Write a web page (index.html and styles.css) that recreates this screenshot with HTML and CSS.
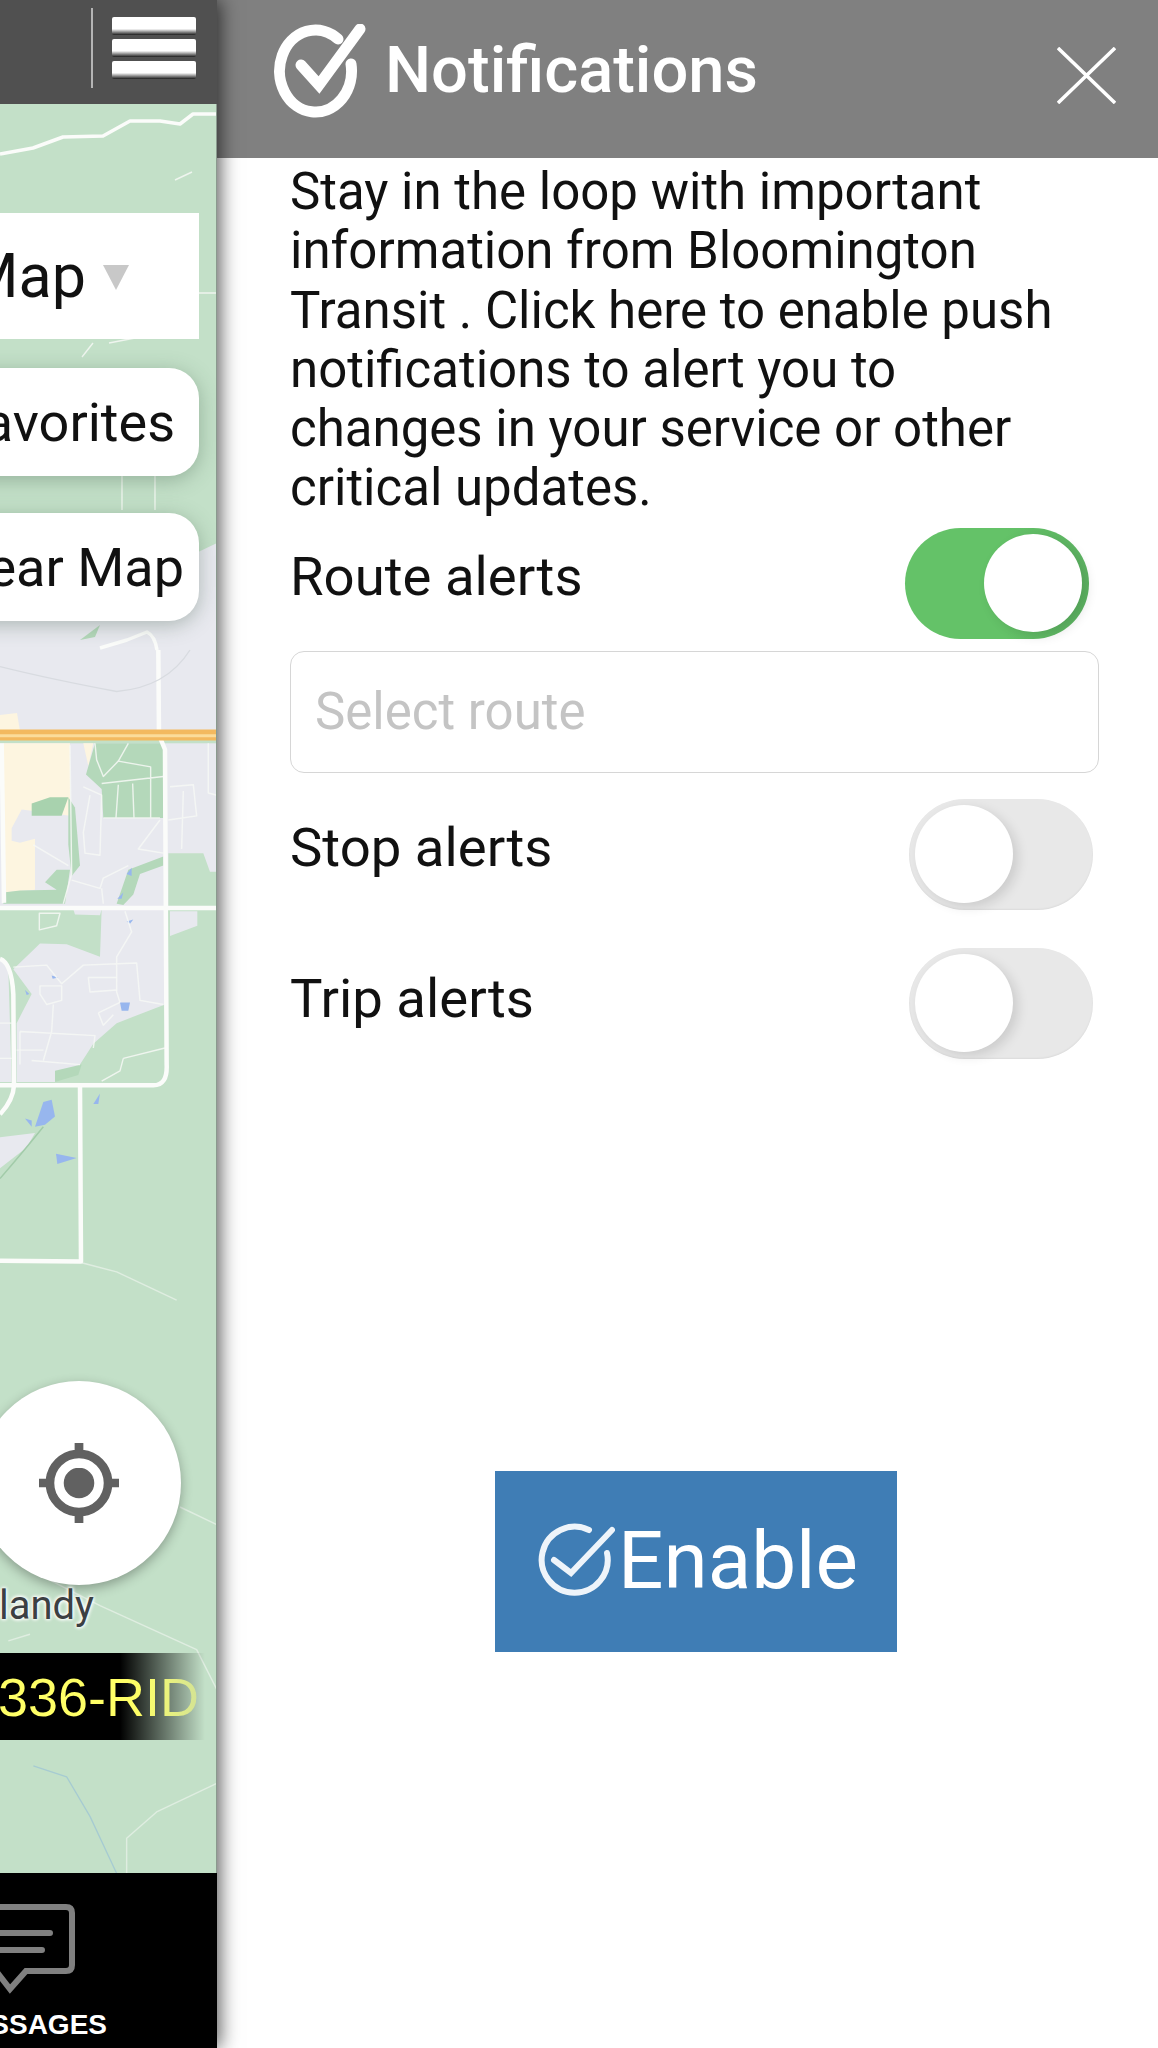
FILE: index.html
```html
<!DOCTYPE html>
<html lang="en">
<head>
  <meta charset="UTF-8">
  <meta name="viewport" content="width=device-width, initial-scale=1.0">
  <title>Notifications</title>
  <link rel="stylesheet" href="styles.css">
</head>
<body>
  <div class="app">

    <div class="side">
      <div class="topbar">
        <span class="divider"></span>
        <div class="burger"><span></span><span></span><span></span></div>
      </div>

      <div class="map">
        <svg class="map-art" viewBox="0 104 217 1769" preserveAspectRatio="none">
          <rect x="0" y="104" width="217" height="1769" fill="#c3e0c8"/>

          <!-- north part, page coordinates -->
          <path class="road" d="M0 154 L33 148 L63 137 L103 136 L130 121 L160 121 L180 124 L193 114 L217 114"/>
          <path class="thin" d="M175 180 L192 172 M180 293 L217 293 M82 357 L93 343 M109 343 L135 338 M122 476 L122 510 M155 476 L155 510"/>
          <path fill="#e8e9ef" d="M0 600 L120 590 L173 564 L217 543 L217 731 L0 731 Z"/>
          <path fill="#b4d8ba" d="M80 640 L100 625 L95 637 Z"/>
          <path fill="#fdf5e0" d="M0 715 L17 713 L20 731 L0 731 Z"/>
          <path class="road" d="M100 648 L127 640 L147 632 Q155 636 157 650"/>

          <!-- middle part, drawn in zoomed coordinates -->
          <g transform="translate(0 650) scale(.3333 .4146)">
            <rect x="0" y="225" width="650" height="400" fill="#e8e9ef"/>
            <path fill="#c3e0c8" d="M505 490 L610 490 L630 535 L650 535 L650 625 L505 625 Z"/>
            <path fill="#fdf5e0" d="M10 225 L210 225 L210 400 L65 385 L35 430 L35 460 L60 465 L105 455 L105 578 L10 585 Z"/>
            <path fill="#fdf5e0" d="M250 225 L280 225 L265 280 Z"/>
            <path fill="#b4d8ba" d="M258 300 L285 225 L490 225 L490 405 L310 405 L305 335 Z"/>
            <path fill="#a8d2ae" d="M95 370 L150 355 L205 355 L185 400 L95 400 Z"/>
            <path fill="#b4d8ba" d="M205 355 L225 380 L240 520 L215 545 L205 470 Z"/>
            <path fill="#b4d8ba" d="M135 560 L170 530 L210 530 L195 612 L10 612 L10 585 L60 580 L170 578 Z"/>
            <path fill="#b4d8ba" d="M350 612 L385 530 L490 498 L490 520 L420 540 L400 590 L370 615 Z"/>

            <path fill="#e8e9ef" d="M305 625 L495 625 L495 855 L350 900 L280 950 L240 1000 L165 1042 L50 1042 L50 900 L95 830 L40 770 L120 708 L200 710 L300 740 Z"/>
            <path fill="#e8e9ef" d="M510 630 L592 630 L592 665 L510 690 Z"/>
            <path fill="#e8e9ef" d="M0 745 L25 770 L35 1042 L0 1042 Z"/>
            <path fill="#e8e9ef" d="M0 1175 L105 1165 L80 1200 L0 1250 Z"/>
            <path fill="#b4d8ba" d="M165 1015 L245 1000 L235 1025 L165 1042 Z"/>
            <path fill="#e8e9ef" d="M220 625 L305 625 L300 640 L225 638 Z"/>

            <path class="water" d="M105 1150 L130 1090 L155 1085 L165 1125 L135 1145 Z"/>
            <path class="water" d="M75 1130 L95 1135 L95 1150 Z"/>
            <path class="water" d="M168 1215 L230 1225 L172 1240 Z"/>
            <path class="water" d="M280 1095 L300 1070 L295 1095 Z"/>
            <path class="water" d="M360 850 L390 850 L385 870 L365 870 Z"/>
            <path class="water" d="M380 540 L395 525 L395 545 Z"/>
            <path class="water" d="M352 600 L370 585 L365 600 Z"/>
            <path class="water" d="M380 655 L400 650 L390 660 Z"/>
            <path class="water" d="M155 785 L175 790 L158 793 Z"/>
            <path class="water" d="M75 820 L88 830 L80 832 Z"/>

            <path class="thin" d="M285 225 L290 265 L310 305 L355 268 L385 225 M355 268 L452 282 L452 405 M305 322 L490 305 M355 325 L348 405 M398 322 L402 405 M310 405 L480 405"/>
            <path class="thin" d="M510 330 L580 325 L590 400 L505 410 M550 340 L545 480 M625 225 L625 345 L650 350 M480 410 L415 480 L490 490"/>
            <path class="thin" d="M210 230 L215 540 L190 612 M215 555 L300 575 L310 550 L385 520 M305 575 L310 612 M250 330 L305 350 L300 495 L255 490 L250 440 L270 350 M100 470 L205 520"/>
            <path class="thin" d="M118 635 L180 635 L170 665 L118 675 Z M375 630 L395 680 L350 740 L350 825 L360 850 M40 765 L140 760 L185 805 L250 760 L410 755 L420 845 L490 855"/>
            <path class="thin" d="M120 810 L185 810 L185 845 L140 855 L120 830 Z M160 855 L155 920 L130 990 M265 790 L350 790 M265 790 L270 825 L350 820 M60 920 L285 930 L280 960 M50 965 L130 965 M60 920 L60 1000 M95 990 L240 1000 M295 875 L360 850 M295 875 L310 905 L340 880 M370 985 L495 960 M370 985 L360 1015 L305 1040"/>
            <path class="thin" d="M0 900 L35 900 M0 985 L35 985"/>

            <path class="road wide" d="M5 225 L12 610 M475 0 L477 205 L495 240 L500 1000 Q503 1050 460 1050 L0 1050 M0 622 L650 622 M240 1050 L243 1475 L0 1473 M0 745 Q35 755 40 830 L42 1050 Q40 1085 0 1120"/>
            <path class="highway" d="M0 205 L650 205"/>
            <path class="highway-mid" d="M0 207 L650 207"/>
            <path class="thin faint" d="M245 1478 L350 1500 L530 1568"/>
            <path class="grey-line" d="M0 40 Q150 70 350 100 Q500 90 570 0"/>
            <path class="creek" d="M0 1275 Q70 1210 130 1150"/>
          </g>

          <!-- south part, drawn in zoomed coordinates -->
          <g transform="translate(0 1360) scale(.3333 .4388)">
            <path class="thin faint" d="M540 335 L650 375 M120 490 L300 560 L590 660 L650 750 M25 640 L90 625 M380 1170 L380 1090 L470 1030 L650 965"/>
            <path class="river" d="M100 925 L200 950 L270 1040 L350 1170"/>
          </g>
        </svg>

        <div class="controls">
          <div class="ctl ctl-select"><span>Map</span><i class="caret"></i></div>
          <div class="ctl ctl-pill ctl-fav">avorites</div>
          <div class="ctl ctl-pill ctl-clear">ear Map</div>
          <div class="locate">
            <svg viewBox="1 1 22 22"><path d="M12 8c-2.21 0-4 1.79-4 4s1.79 4 4 4 4-1.79 4-4-1.79-4-4-4zm8.94 3c-.46-4.17-3.77-7.48-7.94-7.94V1h-2v2.06C6.83 3.52 3.52 6.83 3.06 11H1v2h2.06c.46 4.17 3.77 7.48 7.94 7.94V23h2v-2.06c4.17-.46 7.48-3.77 7.94-7.94H23v-2h-2.06zM12 19c-3.87 0-7-3.13-7-7s3.13-7 7-7 7 3.13 7 7-3.13 7-7 7z"/></svg>
          </div>
          <div class="place">landy</div>
          <div class="phone"><span>336-RID</span></div>
        </div>
      </div>

      <div class="bottom">
        <svg class="msg-icon" viewBox="0 0 90 96">
          <path d="M-30 4 H66 Q72 4 72 10 V62 Q72 68 66 68 H26 L10 86 L-4 68 H-30" />
          <path d="M-20 30 H50 M-20 47 H42"/>
        </svg>
        <span class="msg-label">SSAGES</span>
      </div>
    </div>

    <div class="panel">
      <header class="panel-head">
        <svg class="head-check" viewBox="0 0 92 95">
          <path d="M64 15 A36 41 0 1 0 77 40"/>
          <path d="M27 41 L45 61 L86 5"/>
        </svg>
        <h1>Notifications</h1>
        <svg class="close" viewBox="0 0 59 57">
          <path d="M1 1 L58 56 M58 1 L1 56"/>
        </svg>
      </header>

      <div class="panel-body">
        <p class="intro">Stay in the loop with important information from Bloomington Transit . Click here to enable push notifications to alert you to changes in your service or other critical updates.</p>

        <div class="row row-route">
          <span>Route alerts</span>
          <span class="toggle on"><i></i></span>
        </div>

        <div class="select-box">Select route</div>

        <div class="row row-stop">
          <span>Stop alerts</span>
          <span class="toggle"><i></i></span>
        </div>

        <div class="row row-trip">
          <span>Trip alerts</span>
          <span class="toggle"><i></i></span>
        </div>

        <button class="enable" type="button">
          <svg viewBox="0 0 78 76">
            <path d="M52 7 A33 33 0 1 0 70 30"/>
            <path d="M17 37 L34 50 L75 7"/>
          </svg>
          <span>Enable</span>
        </button>
      </div>
    </div>

  </div>
</body>
</html>
```

FILE: styles.css
```css
* {
  margin: 0;
  padding: 0;
  box-sizing: border-box;
}

body {
  font-family: Roboto, "Liberation Sans", sans-serif;
  background: #fff;
  color: #111;
}

.app {
  display: flex;
  width: 1158px;
  height: 2048px;
  overflow: hidden;
}

/* left side, the map that slid away */
.side {
  width: 217px;
  flex-shrink: 0;
  display: flex;
  flex-direction: column;
  position: relative;
  z-index: 2;
  box-shadow: 3px 0 18px rgba(0, 0, 0, 0.65);
}

.topbar {
  height: 104px;
  background: #505050;
  display: flex;
  justify-content: flex-end;
  padding: 8px 21px 16px 0;
}

.divider {
  width: 2px;
  height: 80px;
  background: #b5b5b5;
  margin-right: 19px;
}

.burger {
  width: 84px;
  height: 62px;
  margin-top: 9px;
  display: flex;
  flex-direction: column;
  justify-content: space-between;
}

.burger span {
  height: 18px;
  border-radius: 2px;
  background: linear-gradient(#fff 0, #fff 66%, #1c1c1c 100%);
}

.map {
  flex: 1;
  position: relative;
  overflow: hidden;
  border-right: 1px solid #8a9a8e;
}

.map-art {
  position: absolute;
  top: 0;
  left: 0;
  width: 217px;
  height: 1769px;
}

.road, .thin, .highway, .highway-mid, .river, .creek, .grey-line {
  fill: none;
  vector-effect: non-scaling-stroke;
  stroke-linejoin: round;
}

.road {
  stroke: #fbfcfa;
  stroke-width: 3.5;
}

.road.wide {
  stroke-width: 4.5;
}

.thin {
  stroke: #f7f9f6;
  stroke-width: 1.4;
  opacity: 0.85;
}

.thin.faint {
  opacity: 0.55;
}

.highway {
  stroke: #f3b95f;
  stroke-width: 11;
}

.highway-mid {
  stroke: #fbdc9a;
  stroke-width: 3;
}

.grey-line {
  stroke: #d8dbe0;
  stroke-width: 1.4;
}

.river {
  stroke: #a6cbd2;
  stroke-width: 1.3;
}

.creek {
  stroke: #a2cba9;
  stroke-width: 1.5;
}

.water {
  fill: #97b6ee;
}

.controls {
  position: absolute;
  top: 0;
  left: 0;
  width: 217px;
  height: 100%;
  display: flex;
  flex-direction: column;
  align-items: flex-end;
  padding-top: 109px;
}

.ctl {
  background: #fff;
  margin-right: 18px;
  font-size: 54px;
  color: #111;
  white-space: nowrap;
  display: flex;
  justify-content: flex-end;
  align-items: center;
  width: 260px;
  flex-shrink: 0;
}

.ctl-select {
  height: 126px;
  padding-right: 113px;
  position: relative;
  font-size: 61px;
}

.caret {
  position: absolute;
  right: 70px;
  top: 52px;
  width: 0;
  height: 0;
  border-left: 13px solid transparent;
  border-right: 13px solid transparent;
  border-top: 25px solid #c8c8c8;
}

.ctl-pill {
  height: 108px;
  border-radius: 30px;
  box-shadow: 0 4px 20px rgba(60, 90, 70, 0.35);
}

.ctl-fav {
  margin-top: 29px;
  padding-right: 24px;
}

.ctl-clear {
  margin-top: 37px;
  padding-right: 15px;
}

.locate {
  width: 204px;
  height: 204px;
  border-radius: 50%;
  background: #fff;
  box-shadow: 0 4px 12px rgba(0, 0, 0, 0.3);
  margin-top: 760px;
  margin-right: 36px;
  flex-shrink: 0;
  display: flex;
  align-items: center;
  justify-content: center;
}

.locate svg {
  width: 80px;
  height: 80px;
  fill: #616161;
  stroke: #616161;
  stroke-width: 0.4;
}

.place {
  font-size: 40px;
  color: #3c4043;
  margin-right: 123px;
  margin-top: -1px;
  line-height: 44px;
  text-shadow: 0 0 3px #fff, 0 0 4px #fff, 0 0 4px #fff;
  white-space: nowrap;
}

.phone {
  width: 217px;
  height: 87px;
  margin-top: 25px;
  flex-shrink: 0;
  background: linear-gradient(90deg, #000 0, #000 120px, rgba(0, 0, 0, 0) 205px);
  display: flex;
  justify-content: flex-end;
  align-items: center;
  padding-right: 18px;
}

.phone span {
  font-family: "Liberation Sans", Arial, sans-serif;
  font-size: 54px;
  white-space: nowrap;
  background: linear-gradient(90deg, #ffff66 70%, #d3e395 100%);
  -webkit-background-clip: text;
  background-clip: text;
  color: transparent;
}

.bottom {
  height: 175px;
  background: #000;
  position: relative;
  overflow: hidden;
}

.msg-icon {
  display: block;
  width: 90px;
  height: 96px;
  margin-top: 30px;
  overflow: visible;
  fill: none;
  stroke: #808080;
  stroke-width: 6;
  stroke-linecap: round;
}

.msg-label {
  position: absolute;
  right: 110px;
  top: 136px;
  color: #fff;
  font-family: "Liberation Sans", Arial, sans-serif;
  font-weight: bold;
  font-size: 28px;
  white-space: nowrap;
}

/* notification panel */
.panel {
  flex: 1;
  display: flex;
  flex-direction: column;
  background: #fff;
}

.panel-head {
  height: 158px;
  background: #808080;
  display: flex;
  align-items: center;
  padding: 0 42px 0 57px;
  color: #fff;
}

.head-check {
  width: 92px;
  height: 95px;
  margin-top: -15px;
  fill: none;
  stroke: #fff;
  stroke-width: 11;
  stroke-linecap: round;
}

.panel-head h1 {
  font-size: 65px;
  font-weight: 500;
  margin-left: 19px;
  margin-top: -18px;
  flex: 1;
}

.close {
  width: 59px;
  height: 57px;
  margin-top: -8px;
  fill: none;
  stroke: #fff;
  stroke-width: 3.5;
}

.panel-body {
  padding: 4px 59px 0 73px;
  display: flex;
  flex-direction: column;
  font-size: 51px;
}

.intro {
  line-height: 59.3px;
}

.row {
  display: flex;
  justify-content: space-between;
  align-items: flex-start;
  line-height: 59px;
  font-size: 54.5px;
}

.row-route {
  margin-top: 10px;
  padding-right: 10px;
}

.row-stop {
  margin-top: 26px;
  padding-right: 6px;
}

.row-trip {
  margin-top: 38px;
  padding-right: 6px;
}

.row span:first-child {
  margin-top: 19px;
}

.row-trip span:first-child {
  margin-top: 21px;
}

.toggle {
  width: 184px;
  height: 111px;
  border-radius: 56px;
  background: #e8e8e8;
  display: flex;
  align-items: center;
  padding-left: 6px;
  box-shadow: inset 0 -1px 2px rgba(0, 0, 0, 0.06);
}

.toggle i {
  display: block;
  width: 98px;
  height: 98px;
  border-radius: 50%;
  background: #fff;
  box-shadow: 5px 4px 12px rgba(0, 0, 0, 0.12);
}

.toggle.on {
  background: linear-gradient(90deg, #64c268 55%, #5db462);
  padding-left: 79px;
  box-shadow: none;
}

.select-box {
  height: 122px;
  margin-top: 12px;
  border: 1.5px solid #d6d6d6;
  border-radius: 14px;
  padding-left: 24px;
  display: flex;
  align-items: center;
  color: #c4c4c4;
  font-size: 51px;
}

.enable {
  width: 402px;
  height: 181px;
  margin: 412px 0 0 205px;
  background: #3f7db5;
  border: none;
  color: #fff;
  font-family: inherit;
  font-size: 80px;
  display: flex;
  align-items: center;
  padding-left: 42px;
}

.enable svg {
  width: 78px;
  height: 76px;
  margin-right: 3px;
  fill: none;
  stroke: #eef4fa;
  stroke-width: 6;
  stroke-linecap: round;
}
```
